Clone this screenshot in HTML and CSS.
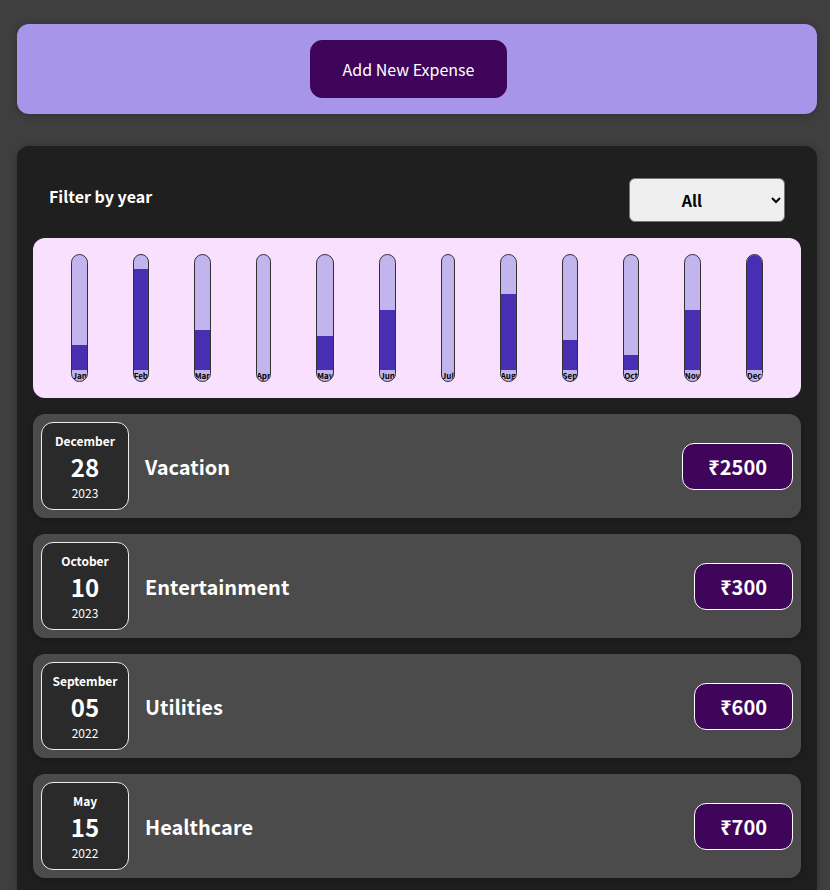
FILE: index.html
```html
<!DOCTYPE html>
<html lang="en">
<head>
<meta charset="utf-8">
<title>Expenses</title>
<link rel="stylesheet" href="styles.css">
</head>
<body>
<main class="page">
  <section class="new-expense">
    <button class="add-button" type="button">Add New Expense</button>
  </section>
  <section class="expenses">
    <div class="filter">
      <label class="filter-label" for="year">Filter by year</label>
      <select class="filter-select" id="year">
        <option>All</option>
        <option>2023</option>
        <option>2022</option>
      </select>
    </div>
    <div class="chart">
      <div class="bar"><div class="track"><div class="fill" style="height:22%"></div></div><span class="month">Jan</span></div>
      <div class="bar"><div class="track"><div class="fill" style="height:88%"></div></div><span class="month">Feb</span></div>
      <div class="bar"><div class="track"><div class="fill" style="height:35%"></div></div><span class="month">Mar</span></div>
      <div class="bar"><div class="track"><div class="fill" style="height:0%"></div></div><span class="month">Apr</span></div>
      <div class="bar"><div class="track"><div class="fill" style="height:30%"></div></div><span class="month">May</span></div>
      <div class="bar"><div class="track"><div class="fill" style="height:52%"></div></div><span class="month">Jun</span></div>
      <div class="bar"><div class="track"><div class="fill" style="height:0%"></div></div><span class="month">Jul</span></div>
      <div class="bar"><div class="track"><div class="fill" style="height:66%"></div></div><span class="month">Aug</span></div>
      <div class="bar"><div class="track"><div class="fill" style="height:26%"></div></div><span class="month">Sep</span></div>
      <div class="bar"><div class="track"><div class="fill" style="height:13%"></div></div><span class="month">Oct</span></div>
      <div class="bar"><div class="track"><div class="fill" style="height:52%"></div></div><span class="month">Nov</span></div>
      <div class="bar"><div class="track"><div class="fill" style="height:100%"></div></div><span class="month">Dec</span></div>
    </div>
    <ul class="list">
      <li class="item">
        <div class="date"><div class="date-month">December</div><div class="date-day">28</div><div class="date-year">2023</div></div>
        <h2 class="title">Vacation</h2>
        <div class="price">₹2500</div>
      </li>
      <li class="item">
        <div class="date"><div class="date-month">October</div><div class="date-day">10</div><div class="date-year">2023</div></div>
        <h2 class="title">Entertainment</h2>
        <div class="price">₹300</div>
      </li>
      <li class="item">
        <div class="date"><div class="date-month">September</div><div class="date-day">05</div><div class="date-year">2022</div></div>
        <h2 class="title">Utilities</h2>
        <div class="price">₹600</div>
      </li>
      <li class="item">
        <div class="date"><div class="date-month">May</div><div class="date-day">15</div><div class="date-year">2022</div></div>
        <h2 class="title">Healthcare</h2>
        <div class="price">₹700</div>
      </li>
    </ul>
  </section>
</main>
</body>
</html>
```
FILE: styles.css
```css
* {
  box-sizing: border-box;
}

body {
  margin: 0;
  min-height: 100vh;
  background: #3f3f3f;
  color: #fff;
  font-family: "Noto Sans CJK JP", "Noto Sans", sans-serif;
}

.page {
  padding: 24px 13px 0 17px;
}

.new-expense {
  display: flex;
  justify-content: center;
  margin-bottom: 32px;
  padding: 16px 33px 16px 16px;
  border-radius: 12px;
  background: #a795e9;
  box-shadow: 0 1px 8px rgba(0, 0, 0, 0.25);
}

.add-button {
  padding: 17px 32px 16px;
  border: 1px solid #3f055a;
  border-radius: 12px;
  background: #3f055a;
  color: #fff;
  font: inherit;
  font-size: 16px;
  line-height: 23px;
  cursor: pointer;
}

.expenses {
  padding: 16px 16px 12px;
  border-radius: 12px 12px 0 0;
  background: #1f1f1f;
  box-shadow: 0 1px 8px rgba(0, 0, 0, 0.25);
}

.filter {
  display: flex;
  justify-content: space-between;
  padding: 16px;
}

.filter-label {
  font-size: 16px;
  font-weight: bold;
  line-height: 36px;
}

.filter-select {
  width: 156px;
  height: 44px;
  padding: 8px 50px 8px 32px;
  border: 1px solid #767676;
  border-radius: 6px;
  background: #efefef;
  color: #000;
  font: inherit;
  font-size: 16px;
  font-weight: bold;
  text-align: center;
}

.chart {
  display: flex;
  justify-content: space-around;
  height: 160px;
  padding: 16px;
  border-radius: 12px;
  background: #f8e0fe;
}

.bar {
  display: flex;
  flex-direction: column;
  overflow: hidden;
  border: 1px solid #313131;
  border-radius: 12px;
  background: #c2b5ee;
}

.track {
  display: flex;
  flex: 1;
  flex-direction: column;
  justify-content: flex-end;
}

.fill {
  background: #472eb3;
}

.month {
  color: #000;
  font-size: 8px;
  font-weight: bold;
  line-height: 11px;
  text-align: center;
}

.list {
  display: flex;
  flex-direction: column;
  gap: 16px;
  margin: 16px 0 0;
  padding: 0;
  list-style: none;
}

.item {
  display: flex;
  align-items: center;
  gap: 16px;
  padding: 8px;
  border-radius: 12px;
  background: #4b4b4b;
  box-shadow: 0 2px 8px rgba(0, 0, 0, 0.25);
}

.date {
  display: flex;
  flex-direction: column;
  align-items: center;
  justify-content: center;
  width: 88px;
  height: 88px;
  padding-top: 2px;
  border: 1px solid #ececec;
  border-radius: 12px;
  background: #2a2a2a;
}

.date-month {
  font-size: 12px;
  font-weight: bold;
  line-height: 18px;
}

.date-day {
  font-size: 24px;
  font-weight: bold;
  line-height: 34px;
}

.date-year {
  font-size: 12px;
  line-height: 18px;
}

.title {
  flex: 1;
  margin: 0;
  padding-top: 2px;
  font-size: 20px;
  line-height: 30px;
}

.price {
  padding: 8px 25px;
  border: 1px solid #fff;
  border-radius: 12px;
  background: #3f055a;
  font-size: 20px;
  font-weight: bold;
  line-height: 29px;
}
```
